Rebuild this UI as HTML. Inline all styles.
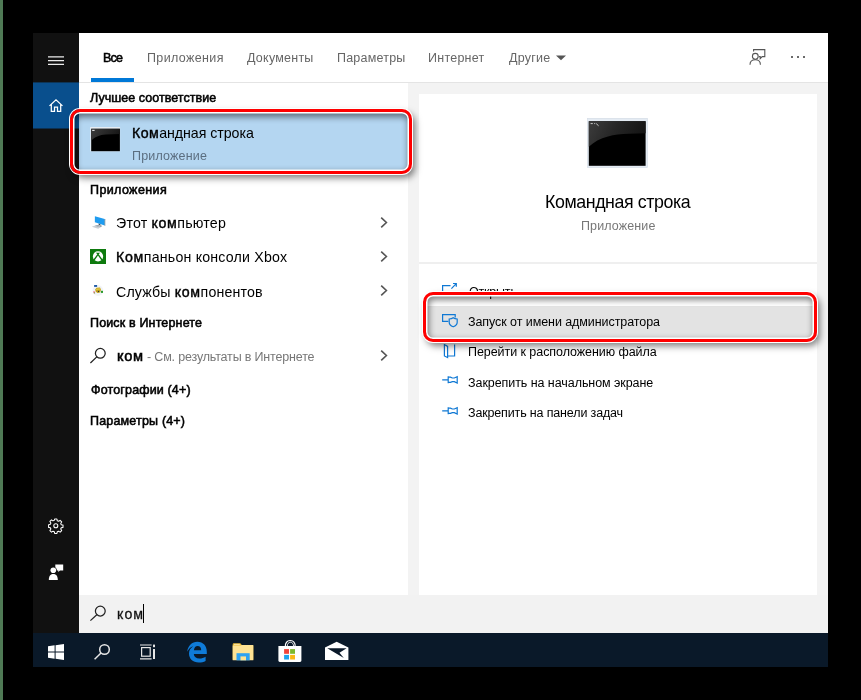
<!DOCTYPE html>
<html><head><meta charset="utf-8">
<style>
*{margin:0;padding:0;box-sizing:border-box}
html,body{width:861px;height:700px;overflow:hidden;background:#000}
body{font-family:"Liberation Sans",sans-serif;position:relative;color:#000}
.abs{position:absolute}
.t{will-change:transform;position:absolute;white-space:nowrap;line-height:1;transform-origin:0 0}
.b{font-weight:normal;-webkit-text-stroke:0.55px currentColor}.t b{font-weight:normal;-webkit-text-stroke:0.42px currentColor}
#strip{left:0;top:0;width:3px;height:700px;background:#4f7a55}
#side{left:33px;top:33px;width:46px;height:600px;background:#111}
#home{left:33px;top:82px;width:46px;height:47px;background:#094f8d;border-top:1px solid #0d3557;border-bottom:1px solid #0d3050}
#main{left:79px;top:33px;width:749px;height:600px;background:#fff}
#hline{left:79px;top:82px;width:749px;height:1px;background:#e4e4e4}
#right{left:408px;top:83px;width:420px;height:512px;background:#f3f3f3}
#card{left:419px;top:94px;width:398px;height:501px;background:#fff}
#csep{left:419px;top:262px;width:398px;height:2px;background:#efefef}
#sbar{left:79px;top:595px;width:749px;height:38px;background:#f2f2f2}
#task{left:33px;top:633px;width:795px;height:34px;background:#0a1929}
#tabul{left:91px;top:78px;width:43px;height:4px;background:#0078d7}
#sel{left:79px;top:109px;width:330px;height:64px;background:#b4d6f1;border-radius:0 9px 9px 0}
#hover{left:424px;top:306px;width:393px;height:33px;background:#e3e3e3}
.red{position:absolute;border:3px solid #f00;border-radius:10px;
 box-shadow:0 0 0 1px #fff, inset 0 0 0 1.5px #fff, 3px 4px 7px 0px rgba(0,0,0,.5), inset 1px 3px 6px 2px rgba(0,0,0,.48)}
</style></head><body>
<div class="abs" id="strip"></div>
<div class="abs" id="side"></div>
<div class="abs" id="home"></div>
<div class="abs" id="main"></div>
<div class="abs" id="hline"></div>
<div class="abs" id="right"></div>
<div class="abs" id="card"></div>
<div class="abs" id="csep"></div>
<div class="abs" id="sbar"></div>
<div class="abs" id="task"></div>
<div class="abs" id="tabul"></div>
<div class="abs" id="sel"></div>
<div class="abs" id="hover"></div>
<!--TEXT-->
<div class="t b" style="left:103.00px;top:52.00px;font-size:12.5px;color:#000;letter-spacing:-0.841px">Все</div>
<div class="t" style="left:147.00px;top:52.00px;font-size:12.5px;color:#666;letter-spacing:0.368px">Приложения</div>
<div class="t" style="left:247.00px;top:52.00px;font-size:12.5px;color:#666;letter-spacing:0.237px">Документы</div>
<div class="t" style="left:337.00px;top:52.00px;font-size:12.5px;color:#666;letter-spacing:0.213px">Параметры</div>
<div class="t" style="left:428.00px;top:52.00px;font-size:12.5px;color:#666;letter-spacing:0.247px">Интернет</div>
<div class="t" style="left:509.00px;top:52.00px;font-size:12.5px;color:#666;letter-spacing:0.236px">Другие</div>
<div class="t b" style="left:90.00px;top:92.00px;font-size:12.5px;color:#000;letter-spacing:0.038px">Лучшее соответствие</div>
<div class="t" style="left:132.00px;top:126.00px;font-size:14.2px;color:#000;letter-spacing:-0.040px"><b style="letter-spacing:0.410px">Ком</b>андная строка</div>
<div class="t" style="left:132.00px;top:150.00px;font-size:12.5px;color:#5b6e80;letter-spacing:0.172px">Приложение</div>
<div class="t b" style="left:90.00px;top:184.00px;font-size:12.5px;color:#000;letter-spacing:0.392px">Приложения</div>
<div class="t" style="left:116.00px;top:216.00px;font-size:14.2px;color:#000;letter-spacing:0.179px">Этот <b style="letter-spacing:0.629px">ком</b>пьютер</div>
<div class="t" style="left:116.00px;top:250.00px;font-size:14.2px;color:#000;letter-spacing:0.191px"><b style="letter-spacing:0.641px">Ком</b>паньон консоли Xbox</div>
<div class="t" style="left:116.00px;top:285.00px;font-size:14.2px;color:#000;letter-spacing:0.147px">Службы <b style="letter-spacing:0.597px">ком</b>понентов</div>
<div class="t b" style="left:90.00px;top:317.00px;font-size:12.5px;color:#000;letter-spacing:0.152px">Поиск в Интернете</div>
<div class="t b" style="left:117.00px;top:349.00px;font-size:14.6px;color:#000;letter-spacing:0.708px">ком</div>
<div class="t" style="left:147.00px;top:351.00px;font-size:12.5px;color:#777;letter-spacing:-0.171px">- См. результаты в Интернете</div>
<div class="t b" style="left:91.00px;top:384.00px;font-size:12.5px;color:#000;letter-spacing:0.150px">Фотографии (4+)</div>
<div class="t b" style="left:90.00px;top:415.00px;font-size:12.5px;color:#000;letter-spacing:0.178px">Параметры (4+)</div>
<div class="t" style="left:545.00px;top:194.00px;font-size:17.8px;color:#000;letter-spacing:-0.408px">Командная строка</div>
<div class="t" style="left:581.00px;top:220.00px;font-size:12.5px;color:#777;letter-spacing:0.117px">Приложение</div>
<div class="t" style="left:469.00px;top:286.00px;font-size:12.5px;color:#000;letter-spacing:-0.198px">Открыть</div>
<div class="t" style="left:468.00px;top:316.00px;font-size:12.5px;color:#000;letter-spacing:-0.070px">Запуск от имени администратора</div>
<div class="t" style="left:468.00px;top:346.00px;font-size:12.5px;color:#000;letter-spacing:-0.059px">Перейти к расположению файла</div>
<div class="t" style="left:468.00px;top:377.00px;font-size:12.5px;color:#000;letter-spacing:-0.062px">Закрепить на начальном экране</div>
<div class="t" style="left:468.00px;top:407.00px;font-size:12.5px;color:#000;letter-spacing:-0.151px">Закрепить на панели задач</div>
<div class="t" style="-webkit-text-stroke:0.28px currentColor;left:117.00px;top:607.00px;font-size:14.2px;color:#111;letter-spacing:1.018px">ком</div>
<!--/TEXT-->
<!--ICONS-->
<!-- hamburger -->
<svg class="abs" style="left:46px;top:52px" width="20" height="16" viewBox="0 0 20 16"><path d="M2 4.900 H18 M2 8.650 H18 M2 12.400 H18" stroke="#ececec" stroke-width="1.100"/></svg>
<!-- home -->
<svg class="abs" style="left:46px;top:96px" width="20" height="20" viewBox="0 0 20 20"><path d="M3.500 9.900 L10 3.900 L16.500 9.900 M5.300 8.600 V15.400 H8.500 V11.200 H11.500 V15.400 H14.700 V8.600" fill="none" stroke="#fff" stroke-width="1.250" stroke-linejoin="miter"/></svg>
<!-- gear -->
<svg class="abs" style="left:47.200px;top:516.900px" width="17.600" height="17.600" viewBox="0 0 20 20"><g fill="none" stroke="#fff" stroke-width="1.2"><circle cx="10" cy="10" r="2.3"/><path d="M8.7 2.3h2.6l.4 2 1.5.6 1.7-1.1 1.8 1.8-1.1 1.7.6 1.5 2 .4v2.6l-2 .4-.6 1.5 1.1 1.7-1.8 1.8-1.7-1.1-1.5.6-.4 2H8.700l-.4-2-1.5-.6-1.7 1.1-1.800-1.800 1.100-1.700-.6-1.500-2-.4V8.700l2-.4.6-1.500-1.100-1.700 1.800-1.800 1.700 1.100 1.500-.6z" stroke-linejoin="round"/></g></svg>
<!-- person feedback (sidebar, filled) -->
<svg class="abs" style="left:46.200px;top:561.500px" width="20" height="20" viewBox="0 0 20 20"><g fill="#fff"><circle cx="7.300" cy="8.300" r="2.800"/><path d="M2.800 18 C2.800 13.500 5 12 7.300 12 S11.800 13.500 11.800 18 Z"/><path d="M9.300 2.600 H17.200 V8.400 H14 L12.300 10.100 V8.400 H11 A3.900 3.900 0 0 0 9.300 5.200 Z"/></g></svg>
<!-- header feedback -->
<svg class="abs" style="left:747px;top:46px" width="22" height="22" viewBox="0 0 22 22"><g fill="none" stroke="#555" stroke-width="1.1"><path d="M6.600 5.600 V3.600 H17.800 V10.600 H15.200 L13.200 12.600 V10.600 H12"/><circle cx="8.300" cy="10.300" r="2.900"/><path d="M3 18.800 C3 15.400 5.400 13.800 8.300 13.800 S13.400 15.400 13.400 18.800"/></g></svg>
<div class="abs" style="left:791px;top:56px;width:2px;height:2px;background:#6a6a6a"></div>
<div class="abs" style="left:797px;top:56px;width:2px;height:2px;background:#6a6a6a"></div>
<div class="abs" style="left:803px;top:56px;width:2px;height:2px;background:#6a6a6a"></div>
<!-- dropdown triangle -->
<svg class="abs" style="left:555px;top:54px" width="12" height="8" viewBox="0 0 12 8"><path d="M1 1.500 H11 L6 6.300 Z" fill="#555"/></svg>
<!-- small cmd icon -->
<svg class="abs" style="left:90px;top:127px" width="31" height="25" viewBox="0 0 31 25"><defs><linearGradient id="gs" x1="0" y1="0" x2="1" y2="0.300"><stop offset="0" stop-color="#3c3c3c"/><stop offset="1" stop-color="#171717"/></linearGradient></defs><rect x="0.200" y="0" width="29.900" height="24.300" fill="#e6edf4"/><rect x="1.200" y="1.800" width="28.700" height="22.400" fill="#000"/><path d="M1.200 13.600 C4.500 10.600 9.500 7.800 16 7.600 L29.900 7 V1.800 H1.200 Z" fill="url(#gs)"/><rect x="2.200" y="2.800" width="2.400" height="1.200" fill="#ddd"/></svg>
<!-- big cmd icon -->
<svg class="abs" style="left:587px;top:118px" width="61" height="50" viewBox="0 0 61 50"><defs><linearGradient id="gb" x1="0" y1="0" x2="1" y2="0.250"><stop offset="0" stop-color="#3d3d3d"/><stop offset="0.500" stop-color="#262626"/><stop offset="1" stop-color="#151515"/></linearGradient></defs><rect x="0.500" y="0.300" width="60" height="49.200" fill="#e4ebf3" stroke="#d3dbe5" stroke-width="0.600"/><rect x="1.800" y="3.200" width="56.800" height="44.600" fill="#000"/><path d="M1.800 28.800 C7 24 13 20.500 21 18.500 C27 16.800 34 16 42 15.800 L58.600 15.200 V3.200 H1.800 Z" fill="url(#gb)"/><path d="M3.600 5.600 h2.200 m1.400 0 h1 m1 0 l2.400 2.200" stroke="#c8c8c8" stroke-width="1" fill="none"/></svg>
<!-- chevrons -->
<svg class="abs" style="left:379px;top:216px" width="10" height="13" viewBox="0 0 10 13"><path d="M2.200 1.600 L7.400 6.500 L2.200 11.400" fill="none" stroke="#555" stroke-width="1.600"/></svg>
<svg class="abs" style="left:379px;top:250px" width="10" height="13" viewBox="0 0 10 13"><path d="M2.200 1.600 L7.400 6.500 L2.200 11.400" fill="none" stroke="#555" stroke-width="1.600"/></svg>
<svg class="abs" style="left:379px;top:284px" width="10" height="13" viewBox="0 0 10 13"><path d="M2.200 1.600 L7.400 6.500 L2.200 11.400" fill="none" stroke="#555" stroke-width="1.600"/></svg>
<svg class="abs" style="left:379px;top:349px" width="10" height="13" viewBox="0 0 10 13"><path d="M2.200 1.600 L7.400 6.500 L2.200 11.400" fill="none" stroke="#555" stroke-width="1.600"/></svg>
<!-- this pc -->
<svg class="abs" style="left:90px;top:214px" width="18" height="16" viewBox="0 0 18 16"><path d="M1.800 12.700 L6.500 11 L12.300 12.200 L8.200 14.700 Z" fill="#c9ced4"/><path d="M5 11.800 L8 10.900 L10.500 11.500 L8 12.800 Z" fill="#9aa4ae"/><path d="M10.200 11.400 L12 11.800 L11 12.600 L9.400 12.200Z" fill="#5f6870"/><path d="M4.850 2.200 L14.700 5.100 V11.600 L4.850 8.300 Z" fill="#1f9cf0"/><path d="M14.700 5.100 L15.200 5.400 V11.900 L14.700 11.600 Z" fill="#56606a"/><path d="M8.600 9.600 L10.400 10.200 V11.200 L8.600 10.800Z" fill="#3a4650"/></svg>
<!-- xbox -->
<svg class="abs" style="left:90px;top:249px" width="16" height="15" viewBox="0 0 16 15"><rect width="16" height="15" fill="#0e7a0e"/><circle cx="8" cy="7.400" r="5.100" fill="#fff"/><path d="M5.700 3.700 L10.300 3.700 L8 5.800 Z" fill="#0e7a0e"/><path d="M8 5.400 L4 11 M8 5.400 L12 11" stroke="#0e7a0e" stroke-width="1.300" fill="none"/><path d="M3.600 4 L5.200 3.100 L6.800 4.600 L4.400 6 Z M12.400 4 L10.800 3.100 L9.200 4.600 L11.600 6 Z" fill="#0e7a0e" opacity="0"/></svg>
<!-- component services -->
<svg class="abs" style="left:90px;top:283px" width="16" height="15" viewBox="0 0 16 15"><circle cx="8" cy="7.500" r="5.400" fill="#f1f4f8"/><path d="M5.200 6.400 L6.600 4.800 L10 4.600 L11 6.800 L10 9.400 L7.400 10 L5.600 8.600 Z" fill="#c4a21a"/><path d="M6 5.800 L9.800 5.200 L10.200 6.400 L6.200 7 Z" fill="#e2c94a"/><circle cx="8.500" cy="8.500" r="0.700" fill="#2a2f3a"/><rect x="4.100" y="2" width="3" height="1.900" fill="#1f5aa8"/><rect x="10.900" y="7.800" width="2.100" height="2.100" fill="#2a9a2a"/><rect x="3.200" y="8.200" width="1.700" height="1.500" fill="#f58a9a"/><rect x="3.800" y="9.300" width="1.300" height="1.200" fill="#8a8a3a"/></svg>
<!-- search icon (list) -->
<svg class="abs" style="left:88px;top:346px" width="20" height="20" viewBox="0 0 20 20"><g fill="none" stroke="#222" stroke-width="1.250"><circle cx="12.300" cy="7.300" r="4.900"/><path d="M8.800 10.900 L2.400 17"/></g></svg>
<!-- search icon (bar) -->
<svg class="abs" style="left:88px;top:604px" width="20" height="20" viewBox="0 0 20 20"><g fill="none" stroke="#222" stroke-width="1.250"><circle cx="12.300" cy="7.100" r="4.900"/><path d="M8.800 10.700 L2.400 16.600"/></g></svg>
<div class="abs" style="left:143px;top:604px;width:1px;height:19px;background:#000"></div>
<!-- action icons -->
<svg class="abs" style="left:440px;top:281px" width="20" height="16" viewBox="0 0 20 16"><g fill="none" stroke="#0f78d4" stroke-width="1.200"><path d="M2.600 12 V4.600 H10.500"/><path d="M11.400 7.600 L16 2.800 M13 2.500 H16.300 V5.800"/></g></svg>
<svg class="abs" style="left:440px;top:311px" width="20" height="18" viewBox="0 0 20 18"><g fill="none" stroke="#0f78d4" stroke-width="1.200"><path d="M8.400 10.400 H2.600 V3.600 H15.200 V6.400"/><path d="M13.200 6.800 C14.400 7.700 15.800 8 17.200 8 V11.200 C17.200 13.400 15.400 15 13.200 15.800 C11 15 9.200 13.400 9.200 11.200 V8 C10.600 8 12 7.700 13.200 6.800 Z"/></g></svg>
<svg class="abs" style="left:440px;top:341.600px" width="20" height="18" viewBox="0 0 20 18"><g fill="none" stroke="#0f78d4" stroke-width="1.200"><path d="M4.400 2 V14 L7.600 15.600 V4.400 L4.400 2.400 M7.600 14 H14.600 V2.600"/></g></svg>
<svg class="abs" style="left:440px;top:372px" width="20" height="16" viewBox="0 0 20 16"><g fill="none" stroke="#0f78d4" stroke-width="1.200"><path d="M2.200 7.800 H8.200 M8.200 4.300 V11.300 M8.200 5.200 H10.500 L12.300 6 H14.300 L17.200 4.600 V11 L14.300 9.600 H12.300 L10.500 10.400 H8.200"/></g></svg>
<svg class="abs" style="left:440px;top:402.500px" width="20" height="16" viewBox="0 0 20 16"><g fill="none" stroke="#0f78d4" stroke-width="1.200"><path d="M2.200 7.800 H8.200 M8.200 4.300 V11.300 M8.200 5.200 H10.500 L12.300 6 H14.300 L17.200 4.600 V11 L14.300 9.600 H12.300 L10.500 10.400 H8.200"/></g></svg>
<!-- taskbar -->
<svg class="abs" style="left:47px;top:643px" width="18" height="18" viewBox="0 0 18 18"><path d="M1 3.200 L7.600 2.300 V8.500 H1 Z M8.600 2.150 L17 1 V8.500 H8.600 Z M1 9.500 H7.600 V15.700 L1 14.800 Z M8.600 9.500 H17 V17 L8.600 15.850 Z" fill="#fff"/></svg>
<svg class="abs" style="left:92px;top:642px" width="20" height="20" viewBox="0 0 20 20"><g fill="none" stroke="#e6e6e6" stroke-width="1.500"><circle cx="12.500" cy="7.500" r="4.800"/><path d="M9 11 L2.600 17.200"/></g></svg>
<svg class="abs" style="left:138px;top:643px" width="20" height="18" viewBox="0 0 20 18"><g fill="none" stroke="#e6e6e6" stroke-width="1.200"><rect x="3.600" y="4.600" width="8.600" height="8.600"/><path d="M2 2 H13.600 M2 15.800 H13.600"/></g><rect x="15" y="1.600" width="2" height="2.600" fill="#e6e6e6"/><rect x="15" y="6" width="2" height="10" fill="#e6e6e6"/></svg>
<!-- edge -->
<svg class="abs" style="left:185px;top:640px" width="24" height="24" viewBox="0 0 24 24"><path d="M2.200 11.800 C2.800 5.800 7 1.800 12.400 1.800 C18.200 1.800 21.800 6 21.800 11.600 V14 H8.800 C9 16.800 11.200 18.600 14.400 18.600 C16.800 18.600 18.800 17.900 20.600 16.800 V21 C18.600 22.100 16.400 22.600 13.800 22.600 C7.800 22.600 4 18.800 4 13.600 C4 10.400 5.600 7.800 8.200 6.200 C5.600 7 3.400 9 2.200 11.800 Z M8.900 10.200 H16.200 C16.200 7.600 14.800 6 12.600 6 C10.600 6 9.200 7.600 8.900 10.200 Z" fill="#0f7bd8" fill-rule="evenodd"/></svg>
<!-- folder -->
<svg class="abs" style="left:231px;top:641.600px" width="24" height="20" viewBox="0 0 24 20"><path d="M1.700 2.400 C1.700 1.700 2.200 1.200 2.900 1.200 H9.300 L10.800 3 H21.200 C21.900 3 22.300 3.500 22.300 4.200 V17.800 H1.700 Z" fill="#eab934"/><path d="M3 1.900 H8.800 V2.700 H3 Z" fill="#fff3c4"/><path d="M1.700 3.600 H9.800 L10.800 3 H22.300 V18.300 H1.700 Z" fill="#ffe394"/><path d="M5.500 11.200 H18.700 V18.300 H5.500 Z" fill="#2fa3f2"/><path d="M9.500 14.400 H15 V18.300 H9.500 Z" fill="#ffe394"/></svg>
<!-- store -->
<svg class="abs" style="left:277px;top:639px" width="26" height="24" viewBox="0 0 26 24"><path d="M8.300 7.600 C8.300 3.800 10.400 1.500 13.200 1.500 S18.200 3.800 18.200 7.600" fill="none" stroke="#fff" stroke-width="1.100"/><path d="M10.200 7.600 C10.200 4.800 11.600 3.200 13.400 3.200 S16.600 4.800 16.600 7.600" fill="none" stroke="#fff" stroke-width="0.900"/><path d="M1.400 7 H24.400 V21.600 C24.400 22.500 23.800 23 23 23 H2.800 C2 23 1.400 22.500 1.400 21.600 Z" fill="#fff"/><rect x="7.100" y="10.100" width="4.900" height="4.700" fill="#f2443a"/><rect x="13.100" y="10.100" width="4.900" height="4.700" fill="#7db92b"/><rect x="7.100" y="15.900" width="4.900" height="4.600" fill="#1ea4ee"/><rect x="13.100" y="15.900" width="4.900" height="4.600" fill="#fbb814"/></svg>
<!-- mail -->
<svg class="abs" style="left:324px;top:640px" width="26" height="22" viewBox="0 0 26 22"><path d="M1 7.500 L12.700 1.700 L24.400 7.500 V20.100 H1 Z" fill="#fff"/><path d="M3.300 8.200 H22.600 L15.500 12.700 L19.800 17.900 Z" fill="#0a1929"/></svg>
<!--/ICONS-->
<div class="red" style="left:70px;top:109px;width:342px;height:65px"></div>
<div class="red" style="left:423px;top:292px;width:394px;height:50px"></div>
</body></html>
